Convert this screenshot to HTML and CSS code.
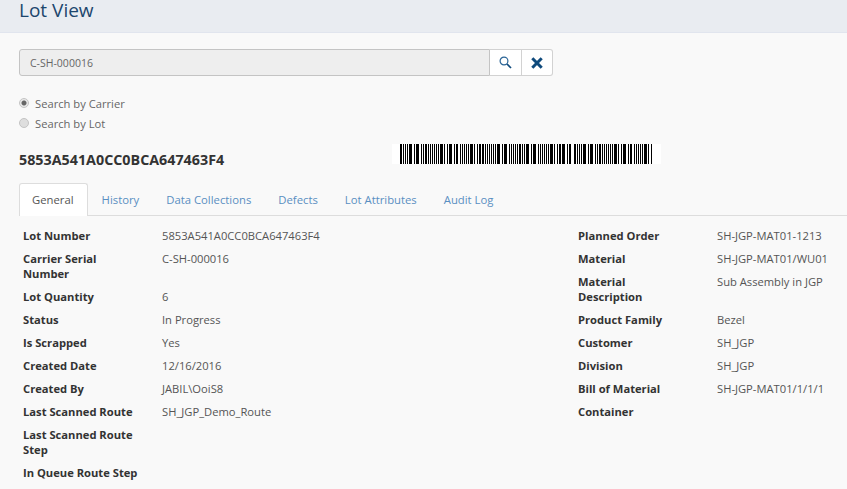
FILE: index.html
```html
<!DOCTYPE html>
<html lang="en">
<head>
    <meta charset="UTF-8">
    <meta name="viewport" content="width=device-width, initial-scale=1.0">
    <title>Lot View</title>
    <link rel="stylesheet" href="styles.css">
</head>
<body>
    <header class="page-header">
        <h1>Lot View</h1>
    </header>
    <main class="content">
        <div class="search-bar">
            <input class="search-input" type="text" value="C-SH-000016" readonly>
            <button class="search-btn" type="button" aria-label="Search">
                <svg width="13" height="13" viewBox="0 0 13 13"><circle cx="5" cy="5" r="3.9" fill="none" stroke="#2a6496" stroke-width="1.2"/><path d="M8 8l4 4" stroke="#0f4a7c" stroke-width="1.7"/></svg>
            </button>
            <button class="search-btn clear-btn" type="button" aria-label="Clear">
                <svg width="12" height="12" viewBox="0 0 12 12"><path d="M1.300 1.300l9.400 9.400M10.700 1.300l-9.400 9.400" stroke="#0f4a7c" stroke-width="3"/></svg>
            </button>
        </div>
        <div class="radio-group">
            <label class="radio-row"><span class="radio checked"></span>Search by Carrier</label>
            <label class="radio-row"><span class="radio"></span>Search by Lot</label>
        </div>
        <div class="lot-row">
            <h2 class="lot-id">5853A541A0CC0BCA647463F4</h2>
            <div class="barcode">
                <svg width="253" height="20" viewBox="0 0 253 20">
                    <path id="bars" d="M0 0h2v20h-2zm3 0h1v20h-1zm2 0h1v20h-1zm2 0h1v20h-1zm2 0h3v20h-3zm5 0h1v20h-1zm2 0h3v20h-3zm5 0h1v20h-1zm2 0h1v20h-1zm2 0h2v20h-2zm3 0h1v20h-1zm2 0h1v20h-1zm2 0h1v20h-1zm2 0h1v20h-1zm2 0h1v20h-1zm2 0h1v20h-1zm2 0h3v20h-3zm4 0h1v20h-1zm3 0h1v20h-1zm2 0h3v20h-3zm5 0h1v20h-1zm2 0h2v20h-2zm4 0h1v20h-1zm2 0h1v20h-1zm2 0h1v20h-1zm2 0h1v20h-1zm2 0h1v20h-1zm2 0h3v20h-3zm4 0h1v20h-1zm3 0h1v20h-1zm2 0h2v20h-2zm3 0h2v20h-2zm3 0h1v20h-1zm2 0h1v20h-1zm2 0h1v20h-1zm2 0h1v20h-1zm2 0h1v20h-1zm2 0h1v20h-1zm2 0h3v20h-3zm5 0h1v20h-1zm2 0h3v20h-3zm5 0h1v20h-1zm2 0h1v20h-1zm2 0h1v20h-1zm2 0h1v20h-1zm2 0h1v20h-1zm2 0h2v20h-2zm3 0h1v20h-1zm2 0h1v20h-1zm2 0h3v20h-3zm5 0h1v20h-1zm2 0h3v20h-3zm5 0h1v20h-1zm2 0h1v20h-1zm2 0h1v20h-1zm2 0h1v20h-1zm2 0h1v20h-1zm2 0h1v20h-1zm2 0h3v20h-3zm4 0h1v20h-1zm3 0h1v20h-1zm2 0h2v20h-2zm3 0h3v20h-3zm5 0h1v20h-1zm2 0h2v20h-2z" fill="#000"/>
                    <use href="#bars" x="174"/>
                </svg>
            </div>
        </div>
        <nav class="tabs">
            <a class="tab active">General</a>
            <a class="tab">History</a>
            <a class="tab">Data Collections</a>
            <a class="tab">Defects</a>
            <a class="tab">Lot Attributes</a>
            <a class="tab">Audit Log</a>
        </nav>
        <section class="details">
            <dl class="info">
                <dt>Lot Number</dt><dd>5853A541A0CC0BCA647463F4</dd>
                <dt>Carrier Serial Number</dt><dd>C-SH-000016</dd>
                <dt>Lot Quantity</dt><dd>6</dd>
                <dt>Status</dt><dd>In Progress</dd>
                <dt>Is Scrapped</dt><dd>Yes</dd>
                <dt>Created Date</dt><dd>12/16/2016</dd>
                <dt>Created By</dt><dd>JABIL\OoiS8</dd>
                <dt>Last Scanned Route</dt><dd>SH_JGP_Demo_Route</dd>
                <dt>Last Scanned Route Step</dt><dd></dd>
                <dt>In Queue Route Step</dt><dd></dd>
            </dl>
            <dl class="info info-right">
                <dt>Planned Order</dt><dd>SH-JGP-MAT01-1213</dd>
                <dt>Material</dt><dd>SH-JGP-MAT01/WU01</dd>
                <dt>Material Description</dt><dd>Sub Assembly in JGP</dd>
                <dt>Product Family</dt><dd>Bezel</dd>
                <dt>Customer</dt><dd>SH_JGP</dd>
                <dt>Division</dt><dd>SH_JGP</dd>
                <dt>Bill of Material</dt><dd>SH-JGP-MAT01/1/1/1</dd>
                <dt>Container</dt><dd></dd>
            </dl>
        </section>
    </main>
</body>
</html>
```

FILE: styles.css
```css
html, body {
    margin: 0;
    height: 489px;
    overflow: hidden;
}
body {
    font-family: "Open Sans", sans-serif;
    font-size: 11.2px;
    line-height: 15px;
    background: #f9f9f9;
    color: #555;
}
.page-header {
    height: 32px;
    background: #e9ecf1;
    border-bottom: 1px solid #e1e5ee;
    padding-left: 19px;
}
h1 {
    margin: 0;
    font-size: 19px;
    font-weight: 400;
    line-height: 21px;
    color: #1c466d;
}
.content {
    padding: 16px 0 0 19px;
}
.search-bar {
    display: flex;
    width: 534px;
    height: 27px;
}
.search-input {
    box-sizing: border-box;
    width: 471px;
    height: 27px;
    padding: 0 10px;
    border: 1px solid #c4c4c4;
    border-radius: 3px 0 0 3px;
    background: #eee;
    font: 10.500px "Open Sans", sans-serif;
    color: #666;
    outline: none;
}
.search-btn {
    box-sizing: border-box;
    width: 32px;
    height: 27px;
    padding: 0;
    display: flex;
    align-items: center;
    justify-content: center;
    background: #fff;
    border: 1px solid #d2d2d2;
    border-left: none;
}
.clear-btn {
    width: 31px;
    border-radius: 0 3px 3px 0;
}
.radio-group {
    margin-top: 17px;
}
.radio-row {
    display: flex;
    align-items: center;
    height: 20px;
    color: #666;
}
.radio {
    box-sizing: border-box;
    width: 10px;
    height: 10px;
    margin-right: 6px;
    border-radius: 50%;
    border: 1px solid #c4c4c4;
    background: #dedede;
}
.radio.checked {
    background: radial-gradient(circle, #666 0 2px, #e8e8e8 3px);
}
.lot-row {
    display: flex;
    align-items: flex-start;
    height: 20px;
    margin-top: 11px;
}
.lot-id {
    width: 373px;
    margin: 6px 0 0;
    font-size: 14.300px;
    font-weight: 700;
    line-height: 20px;
    color: #333;
}
.barcode {
    display: flex;
    box-sizing: border-box;
    width: 269px;
    height: 20px;
    padding-left: 8px;
    background: #fff;
}
.tabs {
    display: flex;
    height: 32px;
    margin-top: 19px;
    border-bottom: 1px solid #ddd;
    font-size: 11.300px;
}
.tab {
    padding: 9px 13px 0;
    margin-right: 1px;
    color: #5a8fc2;
}
.tab.active {
    background: #fff;
    color: #555;
    border: 1px solid #ddd;
    border-bottom: none;
    border-radius: 3px 3px 0 0;
    padding: 8px 13px 0 12px;
    height: 24px;
    margin-bottom: -1px;
}
.details {
    display: flex;
    padding: 12px 0 0 4px;
}
.info {
    display: grid;
    flex: none;
    grid-template-columns: 139px 1fr;
    align-content: start;
    row-gap: 8px;
    width: 555px;
    margin: 0;
}
.info-right {
    width: 269px;
}
.info dt {
    width: 118px;
    font-weight: 700;
    color: #333;
}
.info-right dt {
    width: 110px;
}
.info dd {
    margin: 0;
}
```
